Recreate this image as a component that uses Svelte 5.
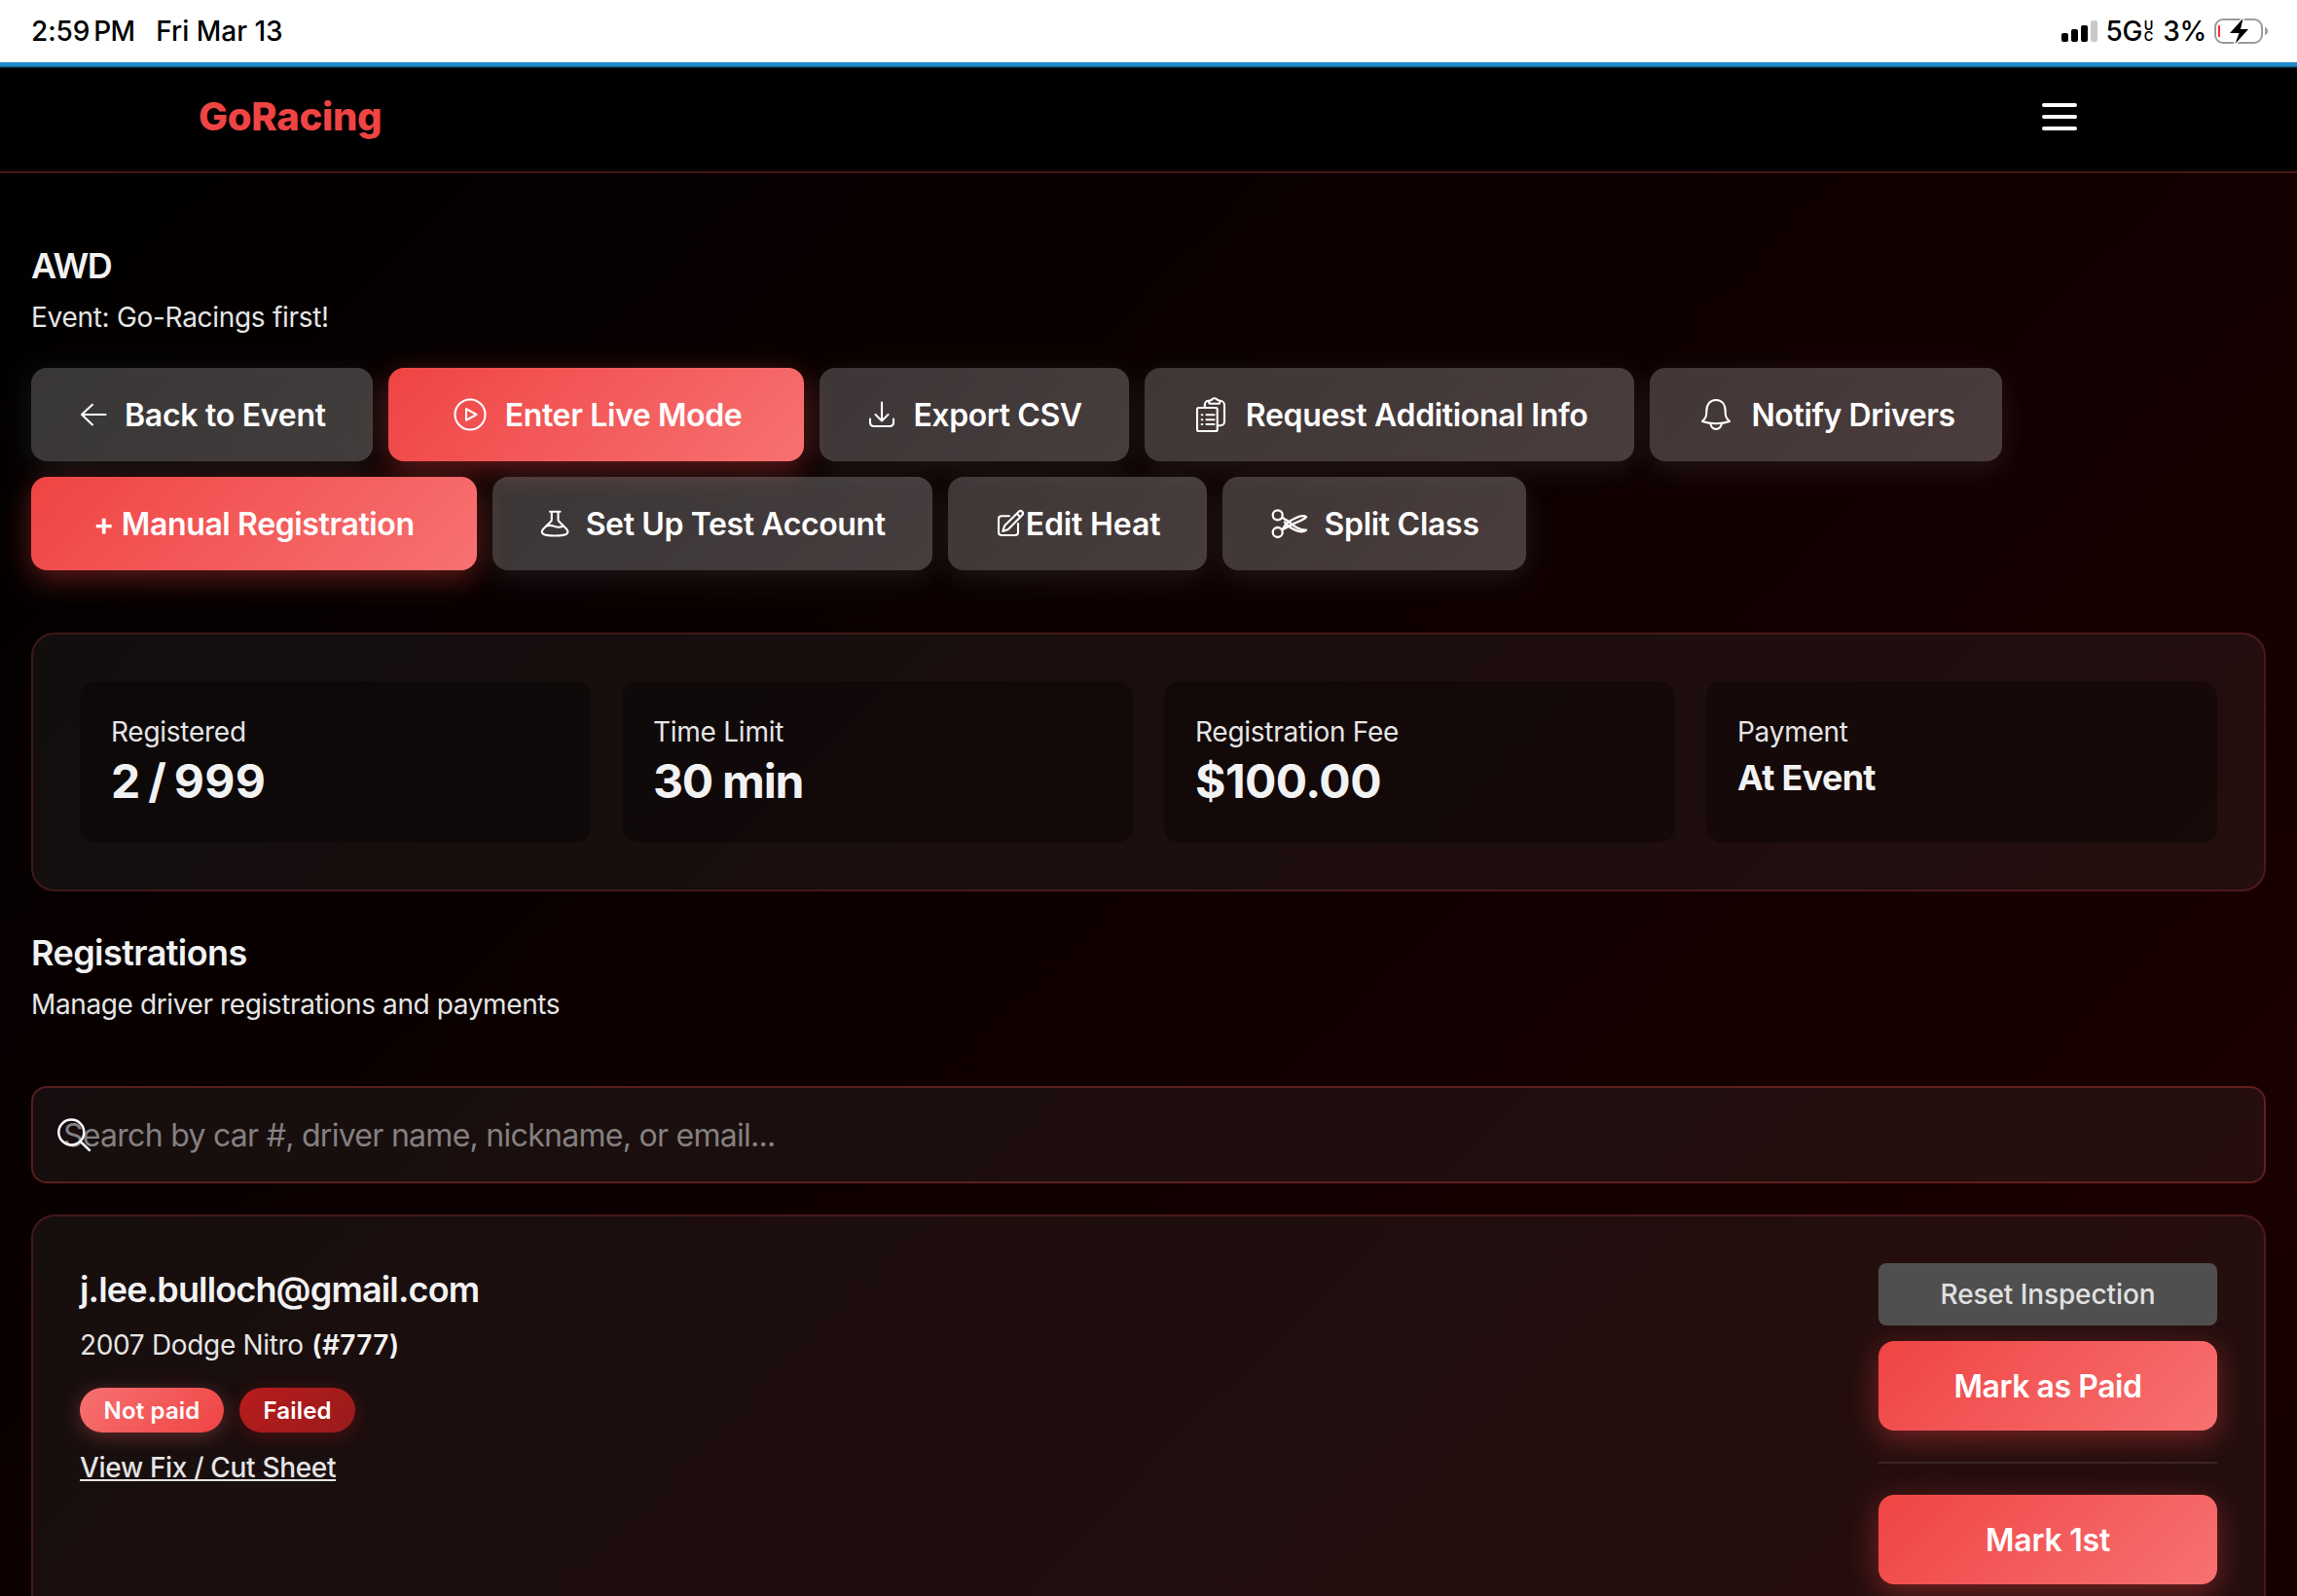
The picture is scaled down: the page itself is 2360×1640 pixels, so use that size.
<script>
    const actions = [
        { label: 'Back to Event', icon: 'back', size: 32, tracking: -0.27 },
        { label: 'Enter Live Mode', icon: 'play', size: 40, primary: true, tracking: -0.37 },
        { label: 'Export CSV', icon: 'download', size: 32, tracking: -0.4 },
        { label: 'Request Additional Info', icon: 'clipboard', size: 40, tracking: -0.32 },
        { label: 'Notify Drivers', icon: 'bell', size: 40, tracking: -0.38 },
        { label: '+ Manual Registration', primary: true, tracking: -0.38 },
        { label: 'Set Up Test Account', icon: 'flask', size: 32, tracking: -0.38 },
        { label: 'Edit Heat', icon: 'edit', size: 32, tight: true, tracking: -0.12 },
        { label: 'Split Class', icon: 'scissors', size: 40, tracking: -0.28 },
    ];

    const stats = [
        { label: 'Registered', value: '2 / 999', tracking: 0.3 },
        { label: 'Time Limit', value: '30 min', tracking: -1.2 },
        { label: 'Registration Fee', value: '$100.00', tracking: -0.55 },
        { label: 'Payment', value: 'At Event', small: true, tracking: -0.7 },
    ];

    const driver = {
        email: 'j.lee.bulloch@gmail.com',
        car: '2007 Dodge Nitro',
        number: '(#777)',
    };
</script>

<svelte:head>
    <title>AWD — GoRacing</title>
</svelte:head>

<div class="screen">
    <div class="status-bar">
        <div class="status-left">
            <span class="clock">2:59</span>
            <span class="meridiem">PM</span>
            <span class="date">Fri Mar 13</span>
        </div>
        <div class="status-right">
            <svg class="signal" width="38" height="24" viewBox="0 0 38 24">
                <rect x="0" y="14" width="7" height="9" rx="2" />
                <rect x="10" y="10" width="7" height="13" rx="2" />
                <rect x="20" y="6" width="7" height="17" rx="2" />
                <rect x="30" y="1" width="7" height="22" rx="2" fill="#c9c9c9" />
            </svg>
            <span class="network">5G</span>
            <span class="uc"><span>U</span><span>C</span></span>
            <span class="percent">3%</span>
            <svg class="battery" width="56" height="28" viewBox="0 0 56 28">
                <rect x="1" y="2" width="48" height="24" rx="8" fill="none" stroke="#9b9b9b" stroke-width="2" />
                <rect x="4" y="8" width="2" height="12" rx=".5" fill="#ff2d3a" />
                <path d="M52 10c2 .6 3 2 3 4s-1 3.400-3 4z" fill="#9b9b9b" />
                <path
                    d="M29.500 1L16 16h9.500l-4 11L35 12h-8z"
                    fill="#000"
                    stroke="#fff"
                    stroke-width="3"
                    paint-order="stroke"
                    stroke-linejoin="round"
                />
            </svg>
        </div>
    </div>

    <header class="navbar">
        <span class="brand">GoRacing</span>
        <button class="menu" aria-label="Menu">
            <span></span>
            <span></span>
            <span></span>
        </button>
    </header>

    <main>
        <h1>AWD</h1>
        <p class="lead">Event: Go-Racings first!</p>

        <div class="actions">
            {#each actions as action}
                <button
                    class="btn"
                    class:primary={action.primary}
                    class:tight={action.tight}
                    style:letter-spacing="{action.tracking}px"
                >
                    {#if action.icon}
                        <svg
                            class="icon"
                            width={action.size}
                            height={action.size}
                            viewBox="0 0 {action.size} {action.size}"
                        >
                            {#if action.icon === 'back'}
                                <path d="M28.500 16H4M15 5.800L4 16l11 10.400" />
                            {:else if action.icon === 'play'}
                                <circle cx="20" cy="20" r="15.500" />
                                <path d="M16 14.200v11.600L26.500 20z" />
                            {:else if action.icon === 'download'}
                                <path d="M4 20.500v4a3.500 3.500 0 0 0 3.500 3.500h17a3.500 3.500 0 0 0 3.500-3.500v-4" />
                                <path d="M16 3.500V22.500M9.500 16l6.500 6.500 6.500-6.500" />
                            {:else if action.icon === 'clipboard'}
                                <rect x="6" y="13" width="20.700" height="24" rx="1.500" />
                                <path d="M13.800 12.500V9.800a4 4 0 0 1 4-4M29.500 5.800a4.500 4.500 0 0 1 4.500 4.500v17a4 4 0 0 1-4 4h-2.500" />
                                <path d="M18.200 7.800C18.200 5.800 19.500 5 21 4.800c.8-2 4.700-2 5.500 0 1.500.2 2.800 1 2.800 3 0 .6-.4 1-1 1h-9.100c-.6 0-1-.4-1-1z" />
                                <path d="M10.700 20.300h.6M15.500 20.300h8M10.700 25.200h.6M15.500 25.200h8M10.700 30h.6M15.500 30h8" />
                            {:else if action.icon === 'bell'}
                                <path d="M10.300 17C10.300 9.500 14 5 20 5s9.700 4.500 9.700 12c0 5 .8 6.500 4.300 10-4 1.500-9 2.200-14 2.200S10 28.500 6 27c3.500-3.500 4.300-5 4.300-10z" />
                                <path d="M14.500 29a5.600 6 0 0 0 11.200 0" />
                            {:else if action.icon === 'flask'}
                                <path d="M11 3.700h10.500M12.800 3.700v8c0 1-.3 1.700-1 2.400L4.200 21.600c-2.800 3-1 5.800 3 6.300 5.800.8 12 .8 17.800 0 4-.5 5.800-3.300 3-6.300l-7.500-7.500c-.7-.7-1-1.400-1-2.400v-8" />
                                <path d="M7.200 18.600c3-1.400 5.600-.9 8.600.3s5.700 1.200 9-.4" />
                            {:else if action.icon === 'edit'}
                                <path d="M15 8.300H7a3 3 0 0 0-3 3V25a3 3 0 0 0 3 3h14a3 3 0 0 0 3-3v-9" />
                                <path d="M8.200 24l1.900-5.700L24.500 4c2.800-2.700 6.200.7 3.500 3.600L13.800 22zM22.800 5.800l3.600 3.600" />
                            {:else if action.icon === 'scissors'}
                                <g stroke-width="2.300">
                                    <circle cx="8.700" cy="11.300" r="5" />
                                    <circle cx="8.700" cy="29" r="5" />
                                    <path d="M13.500 14l6 3.600c5 4.600 11 9.700 18.500 9-3.500 3.500-10.500.9-15.500-2-3-1.700-5.300-3.600-6.700-6.200" />
                                    <path d="M13.500 26.300l2.300-3.800c1.800-2.300 3.700-4 6.700-5.800 5-3 12-6.700 15.500-3.500-3 3.800-12 5.500-18.500 10z" />
                                </g>
                            {/if}
                        </svg>
                    {/if}
                    <span class="label">{action.label}</span>
                </button>
            {/each}
        </div>

        <section class="card stats">
            {#each stats as stat}
                <div class="stat">
                    <span class="stat-label">{stat.label}</span>
                    <span
                        class="stat-value"
                        class:small={stat.small}
                        class:ratio={stat.value.includes('/')}
                        style:letter-spacing="{stat.tracking}px">{stat.value}</span
                    >
                </div>
            {/each}
        </section>

        <h2>Registrations</h2>
        <p class="lead manage">Manage driver registrations and payments</p>

        <div class="search">
            <span class="placeholder">Search by car #, driver name, nickname, or email...</span>
            <svg class="search-icon" width="36" height="36" viewBox="0 0 36 36">
                <circle cx="15.300" cy="15.500" r="13" />
                <path d="M24.500 24.800L34 34" />
            </svg>
        </div>

        <article class="card registration">
            <div class="driver">
                <h3>{driver.email}</h3>
                <p class="car">{driver.car} <strong>{driver.number}</strong></p>
                <div class="badges">
                    <span class="badge unpaid">Not paid</span>
                    <span class="badge failed">Failed</span>
                </div>
                <span class="sheet-link">View Fix / Cut Sheet</span>
            </div>
            <div class="side">
                <button class="reset">Reset Inspection</button>
                <button class="btn primary paid"><span class="label">Mark as Paid</span></button>
                <div class="divider"></div>
                <button class="btn primary first"><span class="label">Mark 1st</span></button>
            </div>
        </article>
    </main>
</div>

<style>
    :global(body) {
        margin: 0;
        background: #000;
    }

    .screen {
        width: 2360px;
        height: 1640px;
        overflow: hidden;
        background: linear-gradient(135deg, #000 0, #1a0000 2475px, #000 4950px);
        color: #f2f2f2;
        font-family: Inter, 'Liberation Sans', sans-serif;
        font-size: 28px;
        line-height: 40px;
    }

    h1,
    h2,
    h3,
    p {
        margin: 0;
    }

    button {
        border: 0;
        font-family: inherit;
    }

    /* iPad status bar */
    .status-bar {
        height: 64px;
        display: flex;
        justify-content: space-between;
        align-items: center;
        padding: 0 29px 0 32px;
        background: #fff;
        color: #000;
        font-weight: 500;
        line-height: 64px;
    }

    .status-left,
    .status-right {
        display: flex;
        align-items: center;
        height: 64px;
    }

    .clock {
        letter-spacing: -0.1px;
    }

    .meridiem {
        margin-left: 4px;
        letter-spacing: -0.8px;
    }

    .date {
        margin-left: 22px;
    }

    .network {
        margin-left: 7px;
        letter-spacing: -0.3px;
    }

    .uc {
        display: flex;
        flex-direction: column;
        margin-left: 1px;
        width: 11px;
        font-size: 13px;
        font-weight: 600;
        line-height: 11px;
        text-align: center;
    }

    .percent {
        margin-left: 9px;
        letter-spacing: -0.25px;
    }

    .battery {
        margin-left: 8px;
    }

    .navbar {
        height: 112px;
        display: flex;
        justify-content: space-between;
        align-items: center;
        padding: 0 226px 0 204px;
        position: relative;
        background: #000;
        border-bottom: 2px solid rgba(239, 68, 68, 0.3);
    }

    /* page load progress along the top edge */
    .navbar::before {
        content: '';
        position: absolute;
        inset: 0 0 auto 0;
        height: 6px;
        background: linear-gradient(#1f8acb 0 4px, #17608d 4px 5px, #0a2b40 5px);
    }

    .brand {
        font-size: 40px;
        font-weight: 800;
        letter-spacing: -0.32px;
        color: #ef4444;
    }

    .menu {
        display: flex;
        flex-direction: column;
        gap: 8px;
        padding: 0;
        background: none;
    }

    .menu span {
        width: 36px;
        height: 4px;
        border-radius: 2px;
        background: #fff;
    }

    main {
        padding: 73px 32px 0;
    }

    h1,
    h2 {
        font-size: 36px;
        font-weight: 600;
        line-height: 44px;
        letter-spacing: -0.58px;
    }

    h1 {
        letter-spacing: -1.400px;
    }

    h2 {
        margin-top: 41px;
    }

    .lead {
        margin-top: 11px;
        letter-spacing: -0.3px;
        color: #e5e5e5;
    }

    .manage {
        letter-spacing: -0.39px;
    }

    .actions {
        display: flex;
        flex-wrap: wrap;
        gap: 16px;
        margin-top: 32px;
        width: 2200px;
    }

    .btn {
        height: 96px;
        display: flex;
        align-items: center;
        justify-content: center;
        gap: 16px;
        padding: 0 48px;
        border-radius: 16px;
        background: linear-gradient(135deg, rgba(255, 255, 255, 0.21), rgba(255, 255, 255, 0.24));
        box-shadow: 0 8px 30px rgba(255, 255, 255, 0.09);
        color: #fff;
        font-size: 32px;
        font-weight: 600;
        line-height: 40px;
        white-space: nowrap;
    }

    .label {
        padding-top: 2px;
    }

    .btn.primary {
        padding: 0 64px;
        background: linear-gradient(135deg, #ef4444, #f87171);
        box-shadow: 0 8px 30px rgba(239, 68, 68, 0.4);
    }

    .btn.tight {
        gap: 0;
    }

    .icon,
    .search-icon {
        flex: none;
        fill: none;
        stroke: #fff;
        stroke-width: 2.100;
        stroke-linecap: round;
        stroke-linejoin: round;
    }

    .card {
        border: 2px solid rgba(239, 68, 68, 0.2);
        border-radius: 24px;
        padding: 48px;
        background: rgba(255, 255, 255, 0.055);
    }

    .stats {
        display: grid;
        grid-template-columns: repeat(4, 1fr);
        gap: 32px;
        margin-top: 64px;
    }

    .stat {
        display: flex;
        flex-direction: column;
        height: 102px;
        padding: 32px;
        border-radius: 16px;
        background: rgba(0, 0, 0, 0.3);
    }

    .stat-label {
        letter-spacing: -0.26px;
        color: #e5e5e5;
    }

    .stat-value {
        font-size: 48px;
        font-weight: 700;
        line-height: 62px;
    }

    .stat-value.ratio {
        word-spacing: -4px;
    }

    .stat-value.small {
        font-size: 36px;
        line-height: 54px;
    }

    .search {
        height: 96px;
        display: flex;
        align-items: center;
        position: relative;
        margin-top: 64px;
        padding-left: 31px;
        border: 2px solid rgba(239, 68, 68, 0.3);
        border-radius: 16px;
        background: rgba(255, 255, 255, 0.055);
    }

    .placeholder {
        padding-top: 2px;
        font-size: 32px;
        letter-spacing: -0.72px;
        color: #858080;
    }

    .search-icon {
        position: absolute;
        left: 24px;
        top: 30px;
        stroke-width: 2.500;
    }

    .registration {
        display: flex;
        justify-content: space-between;
        margin-top: 32px;
        height: 500px;
    }

    h3 {
        font-size: 36px;
        font-weight: 600;
        line-height: 54px;
        letter-spacing: -0.85px;
    }

    .car {
        margin-top: 10px;
        line-height: 41px;
        height: 40px;
        letter-spacing: -0.33px;
        color: #e5e5e5;
    }

    .car strong {
        margin-left: 1px;
        font-weight: 600;
        letter-spacing: 0.3px;
        color: #f2f2f2;
    }

    .badges {
        display: flex;
        gap: 16px;
        margin-top: 24px;
    }

    .badge {
        height: 46px;
        padding: 0 24.500px;
        border-radius: 23px;
        color: #fff;
        font-size: 24px;
        font-weight: 600;
        line-height: 47px;
        letter-spacing: 0.17px;
    }

    .unpaid {
        background: linear-gradient(135deg, #f87171, #ef4444);
        box-shadow: 0 4px 20px rgba(248, 113, 113, 0.3);
    }

    .failed {
        background: linear-gradient(135deg, #b91c1c, #991b1b);
        box-shadow: 0 4px 20px rgba(185, 28, 28, 0.3);
    }

    .sheet-link {
        display: inline-block;
        margin-top: 16px;
        color: #e5e5e5;
        font-weight: 500;
        letter-spacing: -0.33px;
        text-decoration: underline;
        text-decoration-thickness: 2px;
        text-underline-offset: 2px;
    }

    .side {
        display: flex;
        flex-direction: column;
        gap: 16px;
        width: 348px;
    }

    .side .btn {
        height: 92px;
        flex: none;
    }

    .side .paid {
        letter-spacing: -0.45px;
    }

    .side .first {
        letter-spacing: -0.21px;
    }

    .reset {
        height: 64px;
        border-radius: 8px;
        background: #4f4f4f;
        color: #e0e0e0;
        font-size: 28px;
        font-weight: 500;
        letter-spacing: -0.1px;
    }

    .divider {
        flex: none;
        height: 2px;
        margin: 16px 0;
        background: rgba(255, 255, 255, 0.1);
    }
</style>
